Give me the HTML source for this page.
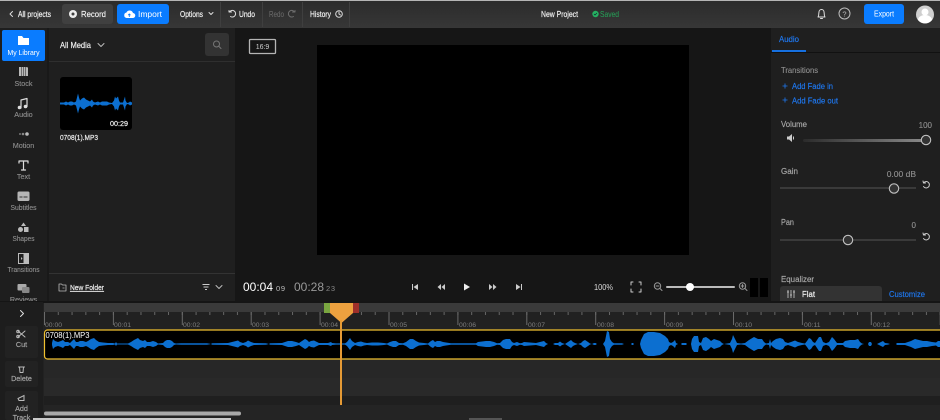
<!DOCTYPE html>
<html><head><meta charset="utf-8"><style>
html,body{margin:0;padding:0;background:#1f1f1f;width:940px;height:420px;overflow:hidden}
svg{display:block;font-family:"Liberation Sans",sans-serif;filter:blur(.3px)}
.w{fill:#f0f0f0;stroke:#f0f0f0;stroke-width:.18}.g{fill:#a8a8a8;stroke:#a8a8a8;stroke-width:.15}.l{fill:#8f8f8f;stroke:#8f8f8f;stroke-width:.12}.b{fill:#1f78f0;stroke:#1f78f0;stroke-width:.15}
.i{fill:none;stroke:#ddd;stroke-width:1;stroke-linecap:round;stroke-linejoin:round}
</style></head><body>
<svg width="940" height="420" viewBox="0 0 940 420" xmlns="http://www.w3.org/2000/svg">
<defs>
<linearGradient id="top" x1="0" y1="0" x2="0" y2="1"><stop offset="0" stop-color="#2b2b2b"/><stop offset="1" stop-color="#373737"/></linearGradient>
<linearGradient id="vol" x1="0" y1="0" x2="1" y2="0"><stop offset="0" stop-color="#2b2b2b"/><stop offset="1" stop-color="#8a8a8a"/></linearGradient>
<pattern id="st" x="44" y="312" width="13.78" height="4" patternUnits="userSpaceOnUse"><rect width="1" height="3" fill="#666"/></pattern>
<pattern id="mt" x="44" y="312" width="68.9" height="14" patternUnits="userSpaceOnUse"><rect width="1" height="13" fill="#6a6a6a"/></pattern>
<polygon id="wf" fill="#0c6fd0" points="52,0 52,1 53,5 55,3 58,2 61,3 63,4 65,2 68,2 70,1 72,3 74,5 76,2 78,2 80,3 83,3 86,2 88,3 91,5 94,6 96,4 99,2 103,1.500 108,1 113,1 115,.5 116,2 117,.5 128,.5 131,2 134,4 136,5 138,6 140,4 143,3 145,4 147,2 150,2 153,3 156,2 158,.5 163,1 165,3 167,4 170,4 172,3 174,1 176,.5 181,.8 207,.8 210,.3 211,0 212,.8 228,1 232,2 236,3 238,3.500 240,2 243,1 246,2 248,3.500 251,2 254,1 266,.8 269,0 270,.8 282,1 285,2 288,3 292,3 296,2 299,1 302,3 305,5 307,4 309,2 311,3 314,3.500 317,2 319,1 328,1 331,2 332,1 336,.6 345,.6 347,2 350,6 352,3 355,1 358,2 361,2.500 364,1.500 367,1 372,1.500 378,1.500 384,1 387,.5 390,2 393,3 396,3 399,1 403,.8 406,2 410,5 413,5 416,3 419,1.500 424,1 428,.5 431,3 433,4 435,2 437,3 440,3 443,2 446,1.500 451,.8 476,.8 478,2 482,2.500 486,3 490,3 494,2 497,.8 500,1 503,4 506,5 510,5 512,2 514,1 517,2 520,.8 522,1 524,2 530,1.500 536,1 540,2 544,3 546,1 548,0 553,0 555,1 558,1 560,2.500 562,1 565,0 568,2 571,4 573,2 575,1 578,0 581,1 583,3 585,4 588,2 590,.5 592,0 594,1 595.5,1 597,0 603,0 605,3 607,13 609,12 610,5 612,2 614,.8 622,.8 624,0 631,0 632,1 633,1 634,0 640,0 641,4 644,10 648,12 654,12 660,11 665,8 668,5 669,2 671,1 673,2 675,4 676,1 678,0 681,0 682,1 686,1 687,0 691,0 692,5 694,8 698,8 699,2 701,1 703,6 706,7 709,5 711,3 714,5 717,4 720,3 722,1 724,0 730,1 732,5 733,9 735,5 737,1 741,.5 745,1 749,4 754,7 758,5 762,5 764,2 766,.5 769,1 770,5 771,1 773,3 776,5 780,6 783,5 785,2 788,1 791,2 795,3.500 798,2 802,1 805,.5 807,3 809,6 811,5 813,2 815,1 817,4 819,7 821,7 823,2 826,.8 829,2 832,7 834,5 837,1 843,1 845,3 850,4 855,4 858,5 860,2 862,.5 864,0 868,0 869,2 871,2 872,0 877,0 879,1 883,3 885,1 888,.6 890,0 896,0 897,1 905,1 908,2 911,3 915,5 919,4 923,3 927,3 932,2 936,1.500 938,3 940,3 940,0"/>
<polygon id="tw" fill="#0c6fd0" points="60,0 60,1 64,1 66,2 68,1 70,2 72,2 74,1 76,2 77,6 78,10 79,6 80,3 82,5 84,6 86,4 88,3 90,2 92,4 93,2 95,1 98,2 100,1 102,2 105,2 107,2 109,1 112,.5 114,3 115,7 116,5 117,6 118,7 119,3 120,1 123,1 124,4 125,7 125.5,3 127,.5 129,1 130,2 132,1 132,0"/>
</defs>
<rect width="940" height="420" fill="#1f1f1f"/>
<!-- top bar -->
<rect width="940" height="28" fill="url(#top)"/>
<rect width="940" height="1" fill="#b5b5b5"/>
<path d="M12.500 11.500 10 14l2.500 2.500" class="i"/>
<text x="18" y="17" font-size="8" class="w" textLength="33" lengthAdjust="spacingAndGlyphs">All projects</text>
<rect x="62" y="4" width="51" height="20" rx="3" fill="#404040"/>
<circle cx="73" cy="14" r="4" fill="#eee"/><circle cx="73" cy="14" r="1.500" fill="#404040"/>
<text x="81" y="17" font-size="8.500" class="w" textLength="25" lengthAdjust="spacingAndGlyphs">Record</text>
<rect x="117" y="4" width="52" height="20" rx="3" fill="#0a7cff"/>
<path d="M126.500 18h6a2.500 2.500 0 0 0 .5-5 3.500 3.500 0 0 0-6.500-.5 2.800 2.800 0 0 0 0 5.500z" fill="#fff"/>
<path d="M129.300 17v-3m-1.200 1.200 1.200-1.200 1.200 1.200" stroke="#0a7cff" stroke-width=".8" fill="none"/>
<text x="138" y="17" font-size="8.500" fill="#fff" textLength="24" lengthAdjust="spacingAndGlyphs">Import</text>
<text x="180" y="17" font-size="8" class="w" textLength="23" lengthAdjust="spacingAndGlyphs">Options</text>
<path d="M209 12.500l2 2 2-2" class="i"/>
<rect x="220" y="2" width="1" height="25" fill="#3f3f3f"/><rect x="262" y="2" width="1" height="25" fill="#3f3f3f"/><rect x="302" y="2" width="1" height="25" fill="#3f3f3f"/><rect x="349" y="2" width="1" height="25" fill="#3f3f3f"/>
<path d="M229 12v-1.500m0 1.500h2.500m-2 0a3.300 3.300 0 1 1 1 4.500" class="i"/>
<text x="239" y="17" font-size="8" class="w" textLength="16" lengthAdjust="spacingAndGlyphs">Undo</text>
<text x="269" y="17" font-size="8" fill="#6d6d6d" textLength="15" lengthAdjust="spacingAndGlyphs">Redo</text>
<path d="M295 12v-1.500m0 1.500h-2.500m2 0a3.300 3.300 0 1 0-1 4.500" class="i" style="stroke:#6d6d6d"/>
<text x="310" y="17" font-size="8" class="w" textLength="21" lengthAdjust="spacingAndGlyphs">History</text>
<circle cx="339" cy="14" r="3.300" class="i"/><path d="M339 12v2l1.500 1" class="i"/>
<text x="541" y="17" font-size="8" class="w" textLength="37" lengthAdjust="spacingAndGlyphs">New Project</text>
<circle cx="595.500" cy="14" r="3.200" fill="#25b060"/><path d="M594 14l1 1 2-2" stroke="#123" stroke-width=".7" fill="none"/>
<text x="600" y="17" font-size="8" fill="#25a358" textLength="19" lengthAdjust="spacingAndGlyphs">Saved</text>
<path d="M818 17c1-1 .5-3 1-5a2.500 2.500 0 0 1 5 0c.5 2 0 4 1 5zM820.500 18.500h2" class="i"/>
<circle cx="844.500" cy="13.500" r="5.500" class="i" style="stroke:#bbb"/>
<text x="844.500" y="16.500" font-size="7.500" fill="#bbb" text-anchor="middle">?</text>
<rect x="864" y="4" width="40" height="20" rx="3" fill="#0a7cff"/>
<text x="874" y="16.500" font-size="8" fill="#fff" textLength="20" lengthAdjust="spacingAndGlyphs">Export</text>
<circle cx="925" cy="14.500" r="9" fill="#cfcfcf"/><circle cx="925" cy="12" r="3.500" fill="#fff"/><path d="M918 20a7 5 0 0 1 14 0 9 9 0 0 1-14 0z" fill="#fff"/>
<!-- sidebar -->
<rect y="28" width="47" height="274" fill="#1e1e1e"/>
<rect x="47" y="28" width="2" height="274" fill="#191919"/>
<rect x="2" y="30" width="43" height="31" rx="2" fill="#0a7cff"/>
<path d="M18 36h4l1.500 2H29v7H18z" fill="#fff"/>
<text x="23.500" y="55" font-size="7.500" fill="#fff" text-anchor="middle" textLength="32" lengthAdjust="spacingAndGlyphs">My Library</text>
<path d="M19 67h2v9h-2zM21.500 67h2v9h-2zM24 67h1.500v9H24zM26 67l2 .5v8.500h-2z" fill="#b9b9b9"/>
<text x="23.500" y="86" font-size="7.200" class="l" text-anchor="middle">Stock</text>
<path d="M21 108v-8l6-1.500v8" class="i" style="stroke-width:1.200"/><circle cx="19.500" cy="107.500" r="1.800" fill="#ddd"/><circle cx="25.500" cy="106.500" r="1.800" fill="#ddd"/>
<text x="23.500" y="117" font-size="7.200" class="l" text-anchor="middle">Audio</text>
<circle cx="27" cy="134" r="1.800" fill="#bbb"/><circle cx="23" cy="134" r="1.300" fill="#888"/><circle cx="20" cy="134" r="1" fill="#777"/>
<text x="23.500" y="148" font-size="7.200" class="l" text-anchor="middle">Motion</text>
<path d="M19 163v-2h9v2M23.500 161v9M21.500 170h4" class="i" style="stroke-width:1.200"/>
<text x="23.500" y="179" font-size="7.200" class="l" text-anchor="middle">Text</text>
<rect x="17.500" y="191.500" width="12" height="9.500" rx="1.500" fill="#b5b5b5"/><path d="M19.500 197h3m1 0h4" stroke="#333"/>
<text x="23.500" y="210" font-size="7.200" class="l" text-anchor="middle" textLength="26" lengthAdjust="spacingAndGlyphs">Subtitles</text>
<path d="M23.500 222.500l2.500 3.500h-5z" fill="#bbb"/><circle cx="20.500" cy="229.500" r="2.500" fill="#bbb"/><rect x="24" y="227" width="4.500" height="5" fill="#bbb"/>
<text x="23.500" y="241" font-size="7.200" class="l" text-anchor="middle" textLength="22" lengthAdjust="spacingAndGlyphs">Shapes</text>
<rect x="18.500" y="253.500" width="10" height="10" fill="none" stroke="#bbb"/><rect x="23.500" y="254" width="5" height="9" fill="#bbb"/><path d="M21 257l1.500 1.500-1.500 1.500z" fill="#bbb"/>
<text x="23.500" y="272" font-size="7.200" class="l" text-anchor="middle" textLength="32" lengthAdjust="spacingAndGlyphs">Transitions</text>
<rect x="17.500" y="284" width="9" height="6.500" rx="1" fill="#aaa"/><rect x="22" y="287" width="7.500" height="6" rx="1" fill="#888"/>
<text x="23.500" y="302" font-size="7.200" class="l" text-anchor="middle">Reviews</text>
<!-- media panel -->
<rect x="49" y="28" width="186" height="274" fill="#1f1f1f"/>
<text x="60" y="48" font-size="8.500" class="w" textLength="31" lengthAdjust="spacingAndGlyphs">All Media</text>
<path d="M98 43.500l3 3 3-3" class="i" style="stroke:#bbb"/>
<rect x="205" y="33" width="24" height="23" rx="3" fill="#333"/>
<circle cx="216.500" cy="44" r="3" class="i" style="stroke:#777"/><path d="M219 46.500l2 2" class="i" style="stroke:#777"/>
<rect x="49" y="61" width="186" height="1" fill="#2f2f2f"/>
<rect x="60" y="77" width="72" height="53" rx="3" fill="#000"/>
<use href="#tw" transform="translate(0,103.500)"/><use href="#tw" transform="translate(0,103.500) scale(1,-1)"/>
<text x="110" y="126" font-size="7" class="w" textLength="18" lengthAdjust="spacingAndGlyphs">00:29</text>
<text x="60" y="140" font-size="7.200" class="w" textLength="38" lengthAdjust="spacingAndGlyphs">0708(1).MP3</text>
<rect x="49" y="273" width="186" height="1" fill="#333"/>
<path d="M59 284h2.500l1 1H66v6h-7z" class="i" style="stroke:#bbb;stroke-width:.8"/><path d="M62.500 288h2" stroke="#bbb" stroke-width=".7"/>
<text x="70" y="290" font-size="7.500" class="w" textLength="34" lengthAdjust="spacingAndGlyphs" text-decoration="underline">New Folder</text>
<path d="M202.500 284.500h7M203.500 287h5M205 289.500h2" stroke="#ccc" stroke-width="1.100"/>
<path d="M216 285.500l3 3 3-3" class="i" style="stroke:#bbb"/>
<!-- preview -->
<rect x="235" y="28" width="536" height="274" fill="#161616"/>
<rect x="249.500" y="39.500" width="26" height="14" rx="1" fill="none" stroke="#b5b5b5" stroke-width="1.300"/>
<text x="262.500" y="49" font-size="7" fill="#ccc" text-anchor="middle">16:9</text>
<rect x="317" y="45" width="372" height="210" fill="#000"/>
<text x="243" y="291" font-size="12" fill="#fff" textLength="30" lengthAdjust="spacingAndGlyphs">00:04</text>
<text x="276" y="291" font-size="7.500" fill="#bbb" textLength="9">09</text>
<text x="294" y="291" font-size="12" fill="#999" textLength="30" lengthAdjust="spacingAndGlyphs">00:28</text>
<text x="326" y="291" font-size="7.500" fill="#888" textLength="9">23</text>
<g fill="#ccc">
<path d="M412 284h1v6h-1zM418 284v6l-4.500-3z"/>
<path d="M441 284v6l-3.500-3zM445 284v6l-3.500-3z"/>
<path d="M464 283.500v7l6-3.500z" fill="#eee"/>
<path d="M489 284v6l3.500-3zM493 284v6l3.500-3z"/>
<path d="M516 284v6l4.500-3zM521 284h1v6h-1z"/>
</g>
<text x="594" y="290" font-size="8" fill="#ddd" textLength="19" lengthAdjust="spacingAndGlyphs">100%</text>
<path d="M631 285v-3h2M639 282h2v3M641 289v3h-2M633 292h-2v-3" class="i" style="stroke:#ccc"/>
<circle cx="657.500" cy="286" r="3.200" class="i" style="stroke:#999"/><path d="M656 286h3M660 288.500l2 2" class="i" style="stroke:#999"/>
<rect x="666" y="286" width="69" height="2" rx="1" fill="#bbb"/>
<circle cx="690" cy="287" r="4" fill="#fff"/>
<circle cx="742.500" cy="286" r="3.200" class="i" style="stroke:#999"/><path d="M741 286h3M742.500 284.500v3M745 288.500l2 2" class="i" style="stroke:#999"/>
<rect x="750" y="278" width="8" height="19" fill="#000"/><rect x="760" y="278" width="8" height="19" fill="#000"/>
<!-- right panel -->
<rect x="771" y="28" width="169" height="274" fill="#1f1f1f"/>
<rect x="771" y="52" width="169" height="1" fill="#111"/>
<text x="779" y="42" font-size="8" class="b" textLength="20" lengthAdjust="spacingAndGlyphs">Audio</text>
<rect x="772" y="50" width="34" height="2" fill="#1670e0"/>
<text x="781" y="73" font-size="8" class="l" textLength="37" lengthAdjust="spacingAndGlyphs">Transitions</text>
<path d="M782.500 86h5M785 83.500v5M782.500 100h5M785 97.500v5" stroke="#1f78f0" stroke-width=".8"/>
<text x="792" y="89" font-size="8" class="b" textLength="41" lengthAdjust="spacingAndGlyphs">Add Fade in</text>
<text x="792" y="103.500" font-size="8" class="b" textLength="46" lengthAdjust="spacingAndGlyphs">Add Fade out</text>
<text x="781" y="127" font-size="8" class="g" textLength="26" lengthAdjust="spacingAndGlyphs">Volume</text>
<text x="932" y="128" font-size="8" class="l" text-anchor="end">100</text>
<path d="M787 136.500h2l3-2.500v8l-3-2.500h-2z" fill="#ccc"/><path d="M793.500 136.500v3" stroke="#ccc"/>
<rect x="803" y="139" width="123" height="3" rx="1.500" fill="url(#vol)"/>
<circle cx="926" cy="140" r="4.700" fill="#333" stroke="#c0c0c0" stroke-width="1.100"/>
<text x="781" y="174" font-size="8" class="g" textLength="17" lengthAdjust="spacingAndGlyphs">Gain</text>
<text x="916" y="177" font-size="8.500" class="l" text-anchor="end">0.00 dB</text>
<rect x="780" y="187.500" width="136" height="1" fill="#555"/>
<circle cx="894" cy="188.500" r="4.700" fill="#333" stroke="#c0c0c0" stroke-width="1.100"/>
<path d="M923 181l.5 2h2m-2 0a3.200 3.200 0 1 1 0 3.500" class="i" style="stroke:#ccc"/>
<text x="781" y="225" font-size="8" class="g" textLength="13" lengthAdjust="spacingAndGlyphs">Pan</text>
<text x="916" y="228" font-size="8" class="l" text-anchor="end">0</text>
<rect x="780" y="239.500" width="136" height="1" fill="#555"/>
<circle cx="848" cy="240" r="4.700" fill="#333" stroke="#c0c0c0" stroke-width="1.100"/>
<path d="M923 233l.5 2h2m-2 0a3.200 3.200 0 1 1 0 3.500" class="i" style="stroke:#ccc"/>
<text x="781" y="282" font-size="8" class="g" textLength="33" lengthAdjust="spacingAndGlyphs">Equalizer</text>
<rect x="780" y="286" width="102" height="20" rx="3" fill="#333"/>
<path d="M788 290v8M791 290v8M794 290v8M787 292h2M790 295h2M793 292h2" stroke="#ccc" stroke-width=".8"/>
<text x="802" y="297" font-size="8" class="w" textLength="13" lengthAdjust="spacingAndGlyphs">Flat</text>
<text x="889" y="297" font-size="8" class="b" textLength="36" lengthAdjust="spacingAndGlyphs">Customize</text>
<!-- timeline -->
<rect y="302" width="940" height="118" fill="#222"/>
<rect y="301" width="940" height="2" fill="#151515"/>
<rect x="44" y="303" width="896" height="9" fill="#3a3a3a"/>
<rect x="44" y="312" width="896" height="17" fill="#212121"/>
<rect x="44" y="312" width="896" height="3" fill="url(#st)"/>
<rect x="44" y="312" width="896" height="13" fill="url(#mt)"/>
<g font-size="6.800" fill="#7f7f7f">
<text x="45" y="327">00:00</text><text x="114" y="327">00:01</text><text x="183" y="327">00:02</text><text x="252" y="327">00:03</text><text x="321" y="327">00:04</text><text x="390" y="327">00:05</text><text x="459" y="327">00:06</text><text x="528" y="327">00:07</text><text x="597" y="327">00:08</text><text x="666" y="327">00:09</text><text x="735" y="327">00:10</text><text x="804" y="327">00:11</text><text x="873" y="327">00:12</text>
</g>
<rect x="44" y="359" width="896" height="19" fill="#272727"/>
<rect x="44" y="378" width="896" height="18" fill="#292929"/>
<rect x="44" y="396" width="896" height="9" fill="#1f1f1f"/>
<rect x="44" y="405" width="896" height="15" fill="#242424"/>
<!-- left tools -->
<rect width="43" height="118" y="302" fill="#1d1d1d"/>
<path d="M20.500 310.500l3 3-3 3" class="i"/>
<rect x="5" y="326" width="33" height="32" rx="2" fill="#222"/>
<rect x="5" y="361" width="33" height="26" rx="2" fill="#222"/>
<rect x="5" y="391" width="33" height="29" rx="2" fill="#222"/>
<path d="M18 331l7 6M25 331l-7 6" class="i" style="stroke:#bbb"/><circle cx="18" cy="336.500" r="1.300" class="i" style="stroke:#bbb"/><circle cx="18" cy="331.500" r="1.300" class="i" style="stroke:#bbb"/>
<text x="21.500" y="347" font-size="7.200" class="g" text-anchor="middle">Cut</text>
<path d="M18.500 367h6M19.500 367l.5 5.500h3l.5-5.500" class="i" style="stroke:#bbb"/>
<text x="21.500" y="381" font-size="7.200" class="g" text-anchor="middle">Delete</text>
<path d="M18 398.500l6-3v5h-5z" fill="none" stroke="#bbb"/>
<text x="21.500" y="411" font-size="7.200" class="g" text-anchor="middle">Add</text>
<text x="21.500" y="420" font-size="7.200" class="g" text-anchor="middle">Track</text>
<!-- clip -->
<rect x="44.500" y="330" width="920" height="29" rx="3" fill="#000" stroke="#f0c030" stroke-width="1.200"/>
<text x="45.500" y="338" font-size="8" fill="#fff" textLength="44" lengthAdjust="spacingAndGlyphs">0708(1).MP3</text>
<use href="#wf" transform="translate(0,344)"/><use href="#wf" transform="translate(0,344) scale(1,-1)"/>
<!-- playhead -->
<rect x="324" y="303" width="7" height="10" fill="#7aa640"/>
<rect x="353" y="303" width="6" height="10" fill="#9e2f2a"/>
<path d="M330 303h23v10l-11.500 10L330 313z" fill="#eda13f"/>
<rect x="340" y="320" width="2" height="85" fill="#e59a35"/>
<!-- scrollbars -->
<rect x="44" y="411.500" width="197" height="4" rx="2" fill="#a9a9a9"/>
<rect x="33" y="418" width="198" height="2" fill="#c9c9c9"/>
<rect x="469" y="418" width="33" height="2" fill="#555"/>
</svg>
</body></html>
